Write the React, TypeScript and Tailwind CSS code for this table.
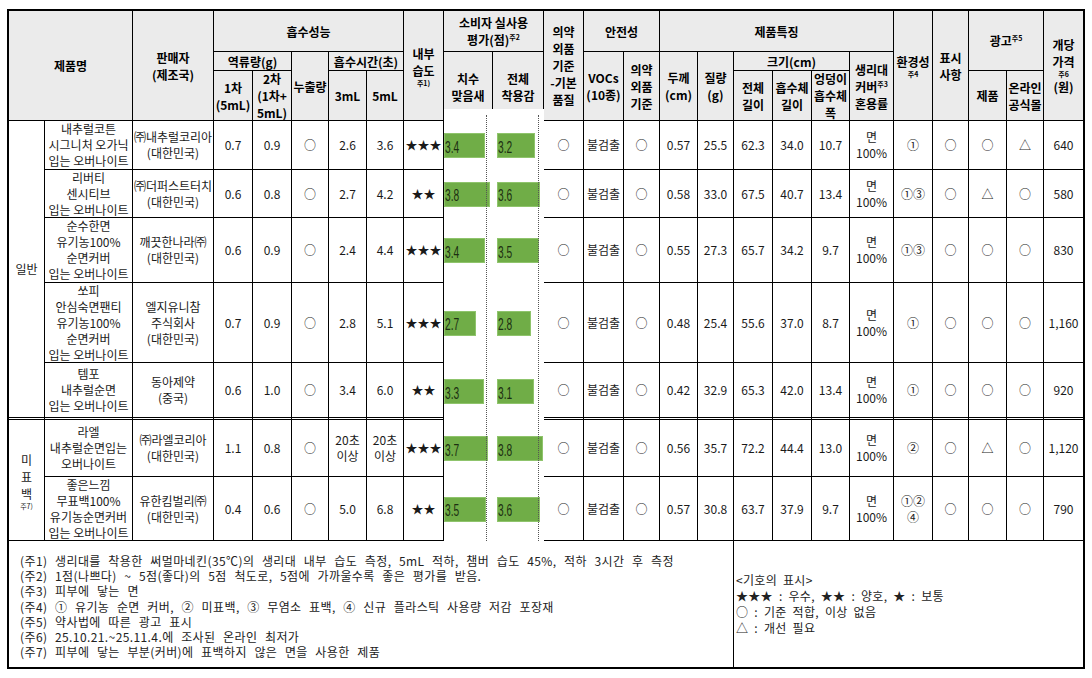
import React from 'react';

type Val = string | string[];

interface Row {
  name: string[];
  seller: string[];
  a: Val[];
  fit: number;
  wear: number;
  b: Val[];
}

const rows: Row[] = [
  {
    name: ['내추럴코튼', '시그니처 오가닉', '입는 오버나이트'],
    seller: ['㈜내추럴코리아', '(대한민국)'],
    a: ['0.7', '0.9', '○', '2.6', '3.6', '★★★'],
    fit: 3.4,
    wear: 3.2,
    b: ['○', '불검출', '○', '0.57', '25.5', '62.3', '34.0', '10.7', ['면', '100%'], '①', '○', '○', '△', '640'],
  },
  {
    name: ['리버티', '센시티브', '입는 오버나이트'],
    seller: ['㈜더퍼스트터치', '(대한민국)'],
    a: ['0.6', '0.8', '○', '2.7', '4.2', '★★'],
    fit: 3.8,
    wear: 3.6,
    b: ['○', '불검출', '○', '0.58', '33.0', '67.5', '40.7', '13.4', ['면', '100%'], '①③', '○', '△', '○', '580'],
  },
  {
    name: ['순수한면', '유기농100%', '순면커버', '입는 오버나이트'],
    seller: ['깨끗한나라㈜', '(대한민국)'],
    a: ['0.6', '0.9', '○', '2.4', '4.4', '★★★'],
    fit: 3.4,
    wear: 3.5,
    b: ['○', '불검출', '○', '0.55', '27.3', '65.7', '34.2', '9.7', ['면', '100%'], '①③', '○', '○', '○', '830'],
  },
  {
    name: ['쏘피', '안심숙면팬티', '유기농100%', '순면커버', '입는 오버나이트'],
    seller: ['엘지유니참', '주식회사', '(대한민국)'],
    a: ['0.7', '0.9', '○', '2.8', '5.1', '★★★'],
    fit: 2.7,
    wear: 2.8,
    b: ['○', '불검출', '○', '0.48', '25.4', '55.6', '37.0', '8.7', ['면', '100%'], '①', '○', '○', '○', '1,160'],
  },
  {
    name: ['템포', '내추럴순면', '입는 오버나이트'],
    seller: ['동아제약', '(중국)'],
    a: ['0.6', '1.0', '○', '3.4', '6.0', '★★'],
    fit: 3.3,
    wear: 3.1,
    b: ['○', '불검출', '○', '0.42', '32.9', '65.3', '42.0', '13.4', ['면', '100%'], '①', '○', '○', '○', '920'],
  },
  {
    name: ['라엘', '내추럴순면입는', '오버나이트'],
    seller: ['㈜라엘코리아', '(대한민국)'],
    a: ['1.1', '0.8', '○', ['20초', '이상'], ['20초', '이상'], '★★★'],
    fit: 3.7,
    wear: 3.8,
    b: ['○', '불검출', '○', '0.56', '35.7', '72.2', '44.4', '13.0', ['면', '100%'], '②', '○', '△', '○', '1,120'],
  },
  {
    name: ['좋은느낌', '무표백100%', '유기농순면커버', '입는 오버나이트'],
    seller: ['유한킴벌리㈜', '(대한민국)'],
    a: ['0.4', '0.6', '○', '5.0', '6.8', '★★'],
    fit: 3.5,
    wear: 3.6,
    b: ['○', '불검출', '○', '0.57', '30.8', '63.7', '37.9', '9.7', ['면', '100%'], ['①②', '④'], '○', '○', '○', '790'],
  },
];

const rowStart = ['row-start-5', 'row-start-6', 'row-start-7', 'row-start-8', 'row-start-9', 'row-start-10', 'row-start-11'];

const notes = [
  '(주1) 생리대를 착용한 써멀마네킨(35℃)의 생리대 내부 습도 측정, 5mL 적하, 챔버 습도 45%, 적하 3시간 후 측정',
  '(주2) 1점(나쁘다) ~ 5점(좋다)의 5점 척도로, 5점에 가까울수록 좋은 평가를 받음.',
  '(주3) 피부에 닿는 면',
  '(주4) ① 유기농 순면 커버, ② 미표백, ③ 무염소 표백, ④ 신규 플라스틱 사용량 저감 포장재',
  '(주5) 약사법에 따른 광고 표시',
  '(주6) 25.10.21.~25.11.4.에 조사된 온라인 최저가',
  '(주7) 피부에 닿는 부분(커버)에 표백하지 않은 면을 사용한 제품',
];

const HEAD =
  'bg-[#ebebeb] border-r border-b border-black flex flex-col items-center justify-center text-center font-bold text-[12px] leading-[17px] text-black';
const CELL =
  'bg-white border-black flex flex-col items-center justify-center text-center text-[12px] leading-[16px] text-[#1a1a1a] whitespace-nowrap';

const Sup = ({ c }: { c: string }) => <sup className="text-[7px] font-bold top-[-5px]">{c}</sup>;
const Tiny = ({ c }: { c: string }) => <div className="text-[7px] leading-[8px] font-bold">{c}</div>;

const Lines = ({ v }: { v: Val }) =>
  Array.isArray(v) ? (
    <>
      {v.map((l, i) => (
        <div key={i}>{l}</div>
      ))}
    </>
  ) : (
    <div>{v}</div>
  );

const valSize = (v: Val) => {
  const s = Array.isArray(v) ? v.join('') : v;
  if (s.startsWith('★')) return 'text-[11px]';
  if (s === '△') return 'text-[10px]';
  if (/[①②③④]/.test(s)) return 'text-[11px]';
  return '';
};

const Bar = ({ v }: { v: number }) => (
  <div
    className="h-[25px] bg-[#70ad47] border border-[#8fc46c] flex items-center overflow-visible"
    style={{ width: `${Math.round(v * 12)}px` }}
  >
    <span className="inline-block origin-left scale-x-[0.6] mt-[3px] font-['Liberation_Sans',sans-serif] text-[17px] leading-none text-[#1c2f12]">
      {v.toFixed(1)}
    </span>
  </div>
);

export default function App() {
  return (
    <div className="w-[1092px] h-[678px] bg-white font-['Noto_Sans_CJK_KR',sans-serif] overflow-hidden">
      <div className="ml-[7px] mt-[9px] w-[1078px] border-2 border-black">
        <div className="grid grid-cols-[36px_88px_81px_39px_39px_37px_38px_37px_40px_49px_51px_40px_40px_36px_38px_36px_39px_39px_38px_44px_39px_36px_38px_37px_39px] grid-rows-[41px_19px_38px_12px_49px_48px_65px_80px_57px_57px_64px]">
          {/* header */}
          <div className={`${HEAD} col-[1/3] row-[1/5]`}>제품명</div>
          <div className={`${HEAD} col-[3/4] row-[1/5]`}>
            <div>판매자</div>
            <div>(제조국)</div>
          </div>
          <div className={`${HEAD} col-[4/9] row-[1/2]`}>흡수성능</div>
          <div className={`${HEAD} col-[4/6] row-[2/3]`}>역류량(g)</div>
          <div className={`${HEAD} col-[4/5] row-[3/5]`}>
            <div>1차</div>
            <div>(5mL)</div>
          </div>
          <div className={`${HEAD} col-[5/6] row-[3/5]`}>
            <div>2차</div>
            <div>(1차+</div>
            <div>5mL)</div>
          </div>
          <div className={`${HEAD} col-[6/7] row-[2/5]`}>누출량</div>
          <div className={`${HEAD} col-[7/9] row-[2/3]`}>흡수시간(초)</div>
          <div className={`${HEAD} col-[7/8] row-[3/5]`}>3mL</div>
          <div className={`${HEAD} col-[8/9] row-[3/5]`}>5mL</div>
          <div className={`${HEAD} col-[9/10] row-[1/5]`}>
            <div>내부</div>
            <div>습도</div>
            <Tiny c="주1)" />
          </div>
          <div className={`${HEAD} col-[10/12] row-[1/2]`}>
            <div>소비자 실사용</div>
            <div>
              평가(점)
              <Sup c="주2" />
            </div>
          </div>
          <div className="bg-[#ebebeb] border-r border-black col-[10/11] row-[2/4] flex flex-col items-center justify-center text-center font-bold text-[12px] leading-[17px] pt-[12px]">
            <div>치수</div>
            <div>맞음새</div>
          </div>
          <div className="bg-[#ebebeb] border-r border-black col-[11/12] row-[2/4] flex flex-col items-center justify-center text-center font-bold text-[12px] leading-[17px] pt-[12px]">
            <div>전체</div>
            <div>착용감</div>
          </div>

          {/* chart of consumer scores */}
          <div className="col-[10/12] row-[4/12] bg-white relative grid grid-cols-[53px_47px] grid-rows-[12px_49px_48px_65px_80px_57px_57px_64px]">
            <div className="absolute left-[42px] top-[6px] bottom-0 border-l border-dotted border-[#555]" />
            <div className="absolute left-[94px] top-[6px] bottom-0 border-l border-dotted border-[#555]" />
            <div className="col-[1/3]" />
            {rows.map((r, i) => (
              <React.Fragment key={i}>
                <div className="flex items-center">
                  <Bar v={r.fit} />
                </div>
                <div className="flex items-center">
                  <Bar v={r.wear} />
                </div>
              </React.Fragment>
            ))}
          </div>

          <div className={`${HEAD} col-[12/13] row-[1/5]`}>
            <div>의약</div>
            <div>외품</div>
            <div>기준</div>
            <div>-기본</div>
            <div>품질</div>
          </div>
          <div className={`${HEAD} col-[13/15] row-[1/2]`}>안전성</div>
          <div className={`${HEAD} col-[13/14] row-[2/5]`}>
            <div>VOCs</div>
            <div>(10종)</div>
          </div>
          <div className={`${HEAD} col-[14/15] row-[2/5]`}>
            <div>의약</div>
            <div>외품</div>
            <div>기준</div>
          </div>
          <div className={`${HEAD} col-[15/21] row-[1/2]`}>제품특징</div>
          <div className={`${HEAD} col-[15/16] row-[2/5]`}>
            <div>두께</div>
            <div>(cm)</div>
          </div>
          <div className={`${HEAD} col-[16/17] row-[2/5]`}>
            <div>질량</div>
            <div>(g)</div>
          </div>
          <div className={`${HEAD} col-[17/20] row-[2/3]`}>크기(cm)</div>
          <div className={`${HEAD} col-[17/18] row-[3/5]`}>
            <div>전체</div>
            <div>길이</div>
          </div>
          <div className={`${HEAD} col-[18/19] row-[3/5]`}>
            <div>흡수체</div>
            <div>길이</div>
          </div>
          <div className={`${HEAD} col-[19/20] row-[3/5]`}>
            <div>엉덩이</div>
            <div>흡수체</div>
            <div>폭</div>
          </div>
          <div className={`${HEAD} col-[20/21] row-[2/5]`}>
            <div>생리대</div>
            <div>
              커버
              <Sup c="주3" />
            </div>
            <div>혼용률</div>
          </div>
          <div className={`${HEAD} col-[21/22] row-[1/5]`}>
            <div>환경성</div>
            <Tiny c="주4" />
          </div>
          <div className={`${HEAD} col-[22/23] row-[1/5]`}>
            <div>표시</div>
            <div>사항</div>
          </div>
          <div className={`${HEAD} col-[23/25] row-[1/3]`}>
            <div>
              광고
              <Sup c="주5" />
            </div>
          </div>
          <div className={`${HEAD} col-[23/24] row-[3/5]`}>제품</div>
          <div className={`${HEAD} col-[24/25] row-[3/5]`}>
            <div>온라인</div>
            <div>공식몰</div>
          </div>
          <div className="bg-[#ebebeb] border-b border-black col-[25/26] row-[1/5] flex flex-col items-center justify-center text-center font-bold text-[12px] leading-[17px]">
            <div>개당</div>
            <div>가격</div>
            <Tiny c="주6" />
            <div>(원)</div>
          </div>

          {/* group labels */}
          <div className={`${CELL} border-r border-b-[3px] border-double col-[1/2] row-[5/10]`}>일반</div>
          <div className={`${CELL} border-r border-b col-[1/2] row-[10/12] leading-[17px]`}>
            <div>미</div>
            <div>표</div>
            <div>백</div>
            <div className="text-[7px] leading-[8px]">주7)</div>
          </div>

          {/* body rows */}
          {rows.map((r, i) => {
            const bb = i === 4 ? 'border-b-[3px] border-double' : 'border-b';
            const rs = rowStart[i];
            return (
              <React.Fragment key={i}>
                <div className={`${CELL} ${bb} ${rs} border-r text-[11.5px]`}>
                  <Lines v={r.name} />
                </div>
                <div className={`${CELL} ${bb} ${rs} border-r text-[11.5px]`}>
                  <Lines v={r.seller} />
                </div>
                {r.a.map((v, j) => (
                  <div key={`a${j}`} className={`${CELL} ${bb} ${rs} border-r ${valSize(v)}`}>
                    <Lines v={v} />
                  </div>
                ))}
                {r.b.map((v, j) => (
                  <div
                    key={`b${j}`}
                    className={`${CELL} ${bb} ${rs} ${j === r.b.length - 1 ? '' : 'border-r'} ${valSize(v)}`}
                  >
                    <Lines v={v} />
                  </div>
                ))}
              </React.Fragment>
            );
          })}
        </div>

        {/* notes */}
        <div className="flex h-[126px] text-[12px] text-[#222]">
          <div className="w-[725px] border-r border-black pl-[11px] pt-[12px] leading-[15.2px] tracking-[0.4px] [word-spacing:4.5px]">
            {notes.map((n, i) => (
              <div key={i} className="whitespace-nowrap">
                {n}
              </div>
            ))}
          </div>
          <div className="flex-1 flex flex-col justify-center pl-[2px] leading-[16px] tracking-[0.3px] [word-spacing:3px]">
            <div>&lt;기호의 표시&gt;</div>
            <div>★★★ : 우수, ★★ : 양호, ★ : 보통</div>
            <div>○ : 기준 적합, 이상 없음</div>
            <div>△ : 개선 필요</div>
          </div>
        </div>
      </div>
    </div>
  );
}
